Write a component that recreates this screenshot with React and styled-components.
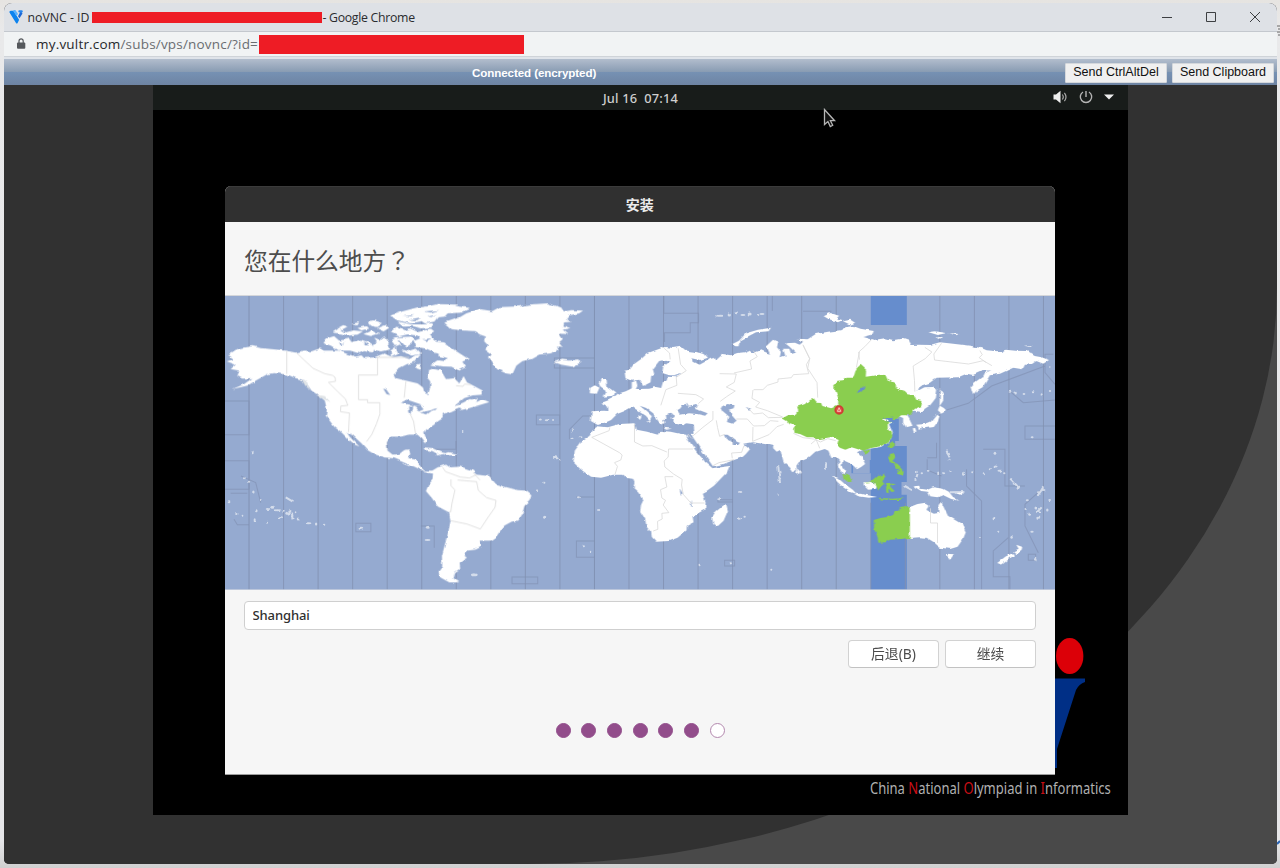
import React from "react";
import styled, { createGlobalStyle } from "styled-components";

const uiFont = '"Open Sans", "Noto Sans", "Noto Sans CJK SC", sans-serif';
const guestFont = '"Noto Sans", "Noto Sans CJK SC", sans-serif';

const GlobalStyle = createGlobalStyle`
  * { box-sizing: border-box; }
  body { margin: 0; background: #e3e3e4; overflow: hidden; }
`;

const Page = styled.div`
  position: relative;
  width: 1280px;
  height: 868px;
  padding: 3px 3px 4px 4px;
  background: linear-gradient(#e6e4e1 0, #e9e9ea 30px, #e6e6e8 840px, #d0d0d0 868px);
`;

const BrowserWindow = styled.div`
  width: 1273px;
  height: 861px;
  display: flex;
  flex-direction: column;
  border-radius: 8px 8px 5px 5px;
  overflow: hidden;
  background: #313131;
`;

const TitleBar = styled.header`
  height: 29px;
  display: flex;
  align-items: center;
  padding: 0 16px 0 5px;
  background: #dee1e6;
  border-bottom: 1px solid #c4c8ce;
  font: 12.3px ${uiFont};
  color: #2a2b2e;
  white-space: pre;
`;

const TitleText = styled.span`
  margin-left: ${(p) => p.$gap}px;
  letter-spacing: ${(p) => p.$tracking || 0}px;
`;

const Redaction = styled.span`
  width: ${(p) => p.$w}px;
  height: ${(p) => p.$h}px;
  margin-left: ${(p) => p.$gap}px;
  background: #ee1c25;
`;

const WindowControls = styled.div`
  margin-left: auto;
  display: flex;
  gap: 32px;
`;

const AddressBar = styled.div`
  height: 25px;
  display: flex;
  align-items: center;
  padding: 0 0 0 12px;
  background: #f1f3f4;
  border-bottom: 1px solid #cfd3d8;
  font: 13.5px ${uiFont};
  color: #6a6d71;
`;

const Url = styled.span`
  margin-left: 10px;
  letter-spacing: 0.19px;
  b { font-weight: 400; color: #26282b; }
`;

const StatusBar = styled.div`
  height: 28px;
  display: flex;
  align-items: center;
  justify-content: flex-end;
  gap: 5px;
  padding: 1px 3px 0 468px;
  border-top: 2px solid #dfe3e9;
  background: linear-gradient(#b2bdcd 0%, #899cb3 49%, #7691b3 51%, #6e84a3 100%);
`;

const StatusText = styled.span`
  margin-right: auto;
  padding-bottom: 1px;
  font: bold 11.6px "Liberation Sans", sans-serif;
  letter-spacing: -0.1px;
  color: #fff;
`;

const StatusButton = styled.button`
  width: ${(p) => p.$w}px;
  height: 20px;
  padding: 0 0 2px;
  border: 1px solid #d5d8dc;
  border-radius: 1px;
  background: #f0f0f0;
  color: #111;
  font: 12.5px "Liberation Sans", sans-serif;
  white-space: nowrap;
`;

const Viewport = styled.main`
  flex: 1;
  background: #494949;
`;

const Backdrop = styled.div`
  width: 1273px;
  height: 779px;
  padding-left: 149px;
  border-bottom-right-radius: 750px 578px;
  background: #313131;
`;

const Desktop = styled.div`
  position: relative;
  width: 975px;
  height: 730px;
  background: #000;
`;

const TopBar = styled.div`
  height: 25px;
  display: grid;
  grid-template-columns: 1fr auto 1fr;
  align-items: center;
  background: #181c1a;
  color: #cfcfcf;
  font: 500 12.8px ${guestFont};
  letter-spacing: 0.2px;
  white-space: pre;
`;

const Tray = styled.div`
  display: flex;
  justify-content: flex-end;
  align-items: center;
  gap: 11px;
  padding: 0 14px 1px 0;
`;

const Dialog = styled.section`
  position: relative;
  width: 830.5px;
  height: 588.5px;
  margin: 76px 0 0 71.5px;
  display: flex;
  flex-direction: column;
  border-radius: 6px 6px 0 0;
  background: #f6f6f6;
  border-bottom: 1px solid #9c9c9c;
  overflow: hidden;
  font-family: ${guestFont};
  color: #4b4b4b;
`;

const DialogTitle = styled.div`
  height: 35.5px;
  display: flex;
  align-items: center;
  justify-content: center;
  background: #303030;
  border-top: 1px solid #3b3b3b;
  color: #ececec;
  font-size: 14px;
  font-weight: 700;
`;

const Question = styled.h1`
  height: 73.5px;
  margin: 0;
  padding: 0 20px 0 19.5px;
  line-height: 76px;
  font-size: 23.7px;
  font-weight: 400;
  color: #4d4d4d;
`;

const QuestionMark = styled.span`
  font-family: "Noto Sans CJK TC", sans-serif;
  text-spacing-trim: space-all;
`;

const MapFrame = styled.div`
  height: 295px;
  border-top: 1px solid #d4d6da;
  svg { display: block; width: 831px; height: 294px; margin-left: -0.5px; }
`;

const Form = styled.div`
  padding: 11px 19px 0;
  display: flex;
  flex-direction: column;
  gap: 9.5px;
`;

const CityField = styled.input`
  height: 29px;
  width: 100%;
  padding: 0 8px 1px;
  border: 1px solid #cfcfcf;
  border-radius: 4px;
  background: #fff;
  color: #303030;
  font: 500 13px ${guestFont};
  letter-spacing: -0.1px;
  outline: none;
`;

const Actions = styled.div`
  display: flex;
  justify-content: flex-end;
  gap: 6px;
`;

const ActionButton = styled.button`
  width: 91px;
  height: 28.5px;
  padding: 0 0 2px;
  border: 1px solid #d2d2d2;
  border-bottom-color: #c2c2c2;
  border-radius: 4px;
  background: #fff;
  color: #4b4b4b;
  font: 13.8px ${guestFont};
`;

const Steps = styled.div`
  margin-top: 54.5px;
  padding-left: 1px;
  display: flex;
  justify-content: center;
  gap: 10.7px;
`;

const Step = styled.span`
  width: 15px;
  height: 15px;
  border-radius: 50%;
  border: 1px solid ${(p) => (p.$done ? "#924d8b" : "#b287ad")};
  background: ${(p) => (p.$done ? "#924d8b" : "#fff")};
`;

const Emblem = styled.svg`
  position: absolute;
  left: 897px;
  top: 550px;
`;

const Pointer = styled.svg`
  position: absolute;
  left: 670px;
  top: 23px;
`;

const Tagline = styled.div`
  width: max-content;
  margin: 0 17px 0 auto;
  transform: scaleX(0.765);
  transform-origin: right center;
  font: 17px/25px ${guestFont};
  color: #b0b0b0;
  em { font-style: normal; color: #c80f16; }
`;

const BehindEdge = styled.svg`
  position: absolute;
  left: 1277px;
  top: 0;
`;

const americas = [
  "M8 212L30 205 12 192 22 187 40 175 62 170 85 166 110 172 150 176 185 180 215 186 240 180 262 182 285 174 300 180 345 180 370 190 395 198 412 194 420 202 450 200 480 188 505 200 530 196 555 205 575 195 590 190 570 215 548 220 520 235 508 250 515 262 545 270 580 278 596 290 600 305 612 310 618 290 618 272 608 260 612 240 625 234 650 240 665 265 690 262 705 278 718 256 728 275 750 286 775 300 775 312 745 314 720 322 700 338 688 348 718 335 745 320 760 322 756 334 775 325 795 334 775 340 735 352 710 358 705 350 680 362 655 370 655 380 640 390 630 402 606 417 600 428 608 450 602 458 592 444 580 432 555 432 530 438 500 438 488 455 490 480 505 492 525 490 540 478 556 476 558 490 552 502 580 508 586 525 600 540 625 540 640 548 620 548 595 540 570 528 545 518 510 503 480 500 450 490 430 478 412 458 385 433 368 424 376 438 390 452 406 468 392 462 370 443 352 425 330 408 318 392 305 375 308 355 302 330 280 312 262 300 252 285 240 268 215 262 190 252 150 247 130 250 95 270 70 285 25 295 60 280 85 262 55 264 40 256 46 240 20 235 35 222Z",
  "M298 157L308 143 330 136 345 150 375 144 382 154 410 147 440 157 452 170 445 185 420 181 405 188 378 180 345 180 320 165Z",
  "M325 126L345 112 365 125 388 119 416 122 400 132 370 135 352 129Z",
  "M340 111L354 103 370 108 355 116ZM382 100L405 94 400 104ZM430 91L450 89 476 97 460 109 440 105ZM458 113L488 102 494 112 478 122Z",
  "M498 75L535 62 580 50 680 44 737 52 712 66 670 68 661 78 640 80 630 93 602 98 592 91 560 98 518 88Z",
  "M500 126L520 108 543 119 558 113 582 124 620 114 630 122 602 137 550 131 524 137Z",
  "M520 92L560 101 600 101 628 97 622 110 590 113 566 106 540 108ZM560 58L640 40 700 42 660 60 600 70ZM418 130L440 120 466 128 440 136ZM505 140L560 138 572 148 545 168 528 150ZM445 160L468 152 490 162 498 176 470 182 452 178ZM575 128L615 126 625 142 590 146ZM400 112L425 106 432 114 412 119Z",
  "M450 144L465 150 480 137 495 158 468 169ZM501 149L520 139 530 163 516 169ZM499 180L514 169 522 190 501 199Z",
  "M568 151L590 142 606 151 623 142 635 153 660 155 682 172 705 187 733 205 714 213 725 229 704 240 681 228 653 227 621 222 639 209 662 211 670 202 640 194 623 181 604 173 574 169Z",
  "M530 176L552 181 574 174 590 190 562 195 545 187ZM572 224L584 219 592 238 577 233ZM630 99L616 104 608 98ZM598 470L624 472 652 485 670 489 642 492 625 481 602 478ZM658 490L675 484 697 490 689 494 665 493ZM636 490L649 493 638 494Z",
  "M624 540L640 530 665 522 677 530 710 528 745 540 756 552 795 556 815 580 840 588 880 598 904 600 921 614 916 630 900 646 893 672 882 690 862 693 840 705 831 716 817 736 797 750 767 750 772 768 754 777 730 780 721 796 728 801 703 819 705 835 692 845 687 862 705 875 675 875 648 860 643 843 654 828 653 795 663 757 673 720 679 690 674 665 640 647 623 622 605 601 613 582 625 567 626 550Z",
  "M660 96L706 80 726 68 766 55 804 61 826 49 884 47 912 42 970 38 1010 50 1018 62 1040 58 1076 60 1064 68 1034 74 1025 86 1042 93 1019 95 1017 105 1038 112 1015 117 1031 130 1005 129 1015 145 1005 154 1015 168 998 168 1002 179 978 188 944 192 920 205 894 211 876 225 864 251 845 248 818 235 805 214 794 200 802 191 783 177 792 165 779 151 785 138 768 132 750 121 710 119 682 115Z",
  "M990 214L1011 207 1036 210 1061 206 1068 216 1044 228 1010 222Z",
];

const oldWorld = [
  "M165 240L180 237 194 220 216 204 235 187 260 178 285 169 310 172 335 168 350 180 380 184 402 190 412 201 392 208 369 203 372 213 390 222 405 214 421 202 435 198 441 207 460 190 484 194 503 187 525 185 534 178 551 187 574 179 601 190 590 166 610 147 626 154 622 170 634 184 630 200 647 195 640 174 659 174 664 190 679 186 657 166 646 158 676 156 690 162 700 153 681 144 714 146 738 130 775 123 812 119 827 110 850 106 872 114 912 121 907 132 881 139 913 148 945 143 970 149 998 144 1018 151 1025 163 1047 162 1080 163 1110 155 1150 159 1200 165 1233 171 1250 179 1300 183 1307 177 1337 180 1370 181 1394 196 1415 200 1437 208 1420 219 1399 211 1386 220 1365 222 1358 236 1330 231 1290 249 1260 254 1250 270 1238 290 1220 300 1209 313 1202 289 1215 275 1240 257 1245 247 1264 239 1235 242 1210 253 1190 249 1165 260 1100 261 1080 276 1050 286 1044 300 1064 290 1090 289 1102 297 1098 322 1081 344 1065 354 1055 364 1032 360 1010 372 1020 388 1028 405 1009 410 1000 397 1000 382 987 377 971 381 945 386 970 394 958 401 969 428 960 453 936 469 898 474 873 479 862 485 878 502 886 520 874 529 862 536 851 525 837 516 819 508 816 525 829 543 820 551 808 532 808 511 796 500 785 502 776 480 765 475 735 485 715 503 688 514 680 525 682 537 668 545 657 530 643 518 632 478 621 483 610 472 612 466 590 461 550 455 520 459 503 454 488 443 474 432 463 432 469 445 489 455 490 463 506 463 514 452 525 463 541 476 528 491 518 500 493 508 464 519 430 527 406 492 370 440 365 429 375 430 372 401 350 398 340 404 318 399 314 387 305 382 315 376 304 369 289 373 291 385 281 384 285 397 275 403 264 388 251 368 230 352 211 345 233 364 247 377 241 389 229 375 204 359 188 349 164 362 143 370 125 388 110 395 85 403 64 391 67 362 100 360 117 361 116 348 96 336 113 330 130 322 145 309 169 302 187 293 187 275 200 270 204 285 199 295 239 294 259 289 275 292 281 272 291 270 294 258 320 260 324 254 300 254 278 247 281 228 302 212 287 207 269 211 250 235 254 250 245 257 243 275 229 282 221 286 210 267 187 270 168 263Z",
  "M85 407L115 410 150 400 195 398 202 417 233 423 265 432 271 420 303 423 331 429 350 432 357 449 377 478 407 514 429 533 480 526 472 545 433 585 412 600 399 607 408 635 407 656 369 677 372 695 352 705 351 719 324 741 298 751 260 753 247 739 245 725 231 708 227 686 212 661 215 642 222 627 210 606 192 590 195 576 190 564 171 562 162 552 131 552 95 561 65 558 35 537 12 515 16 480 39 448 60 436 72 416Z",
  "M470 640L475 660 462 690 445 706 431 701 428 682 440 662 455 650ZM94 266L111 264 114 288 137 305 133 315 100 318 109 301 94 291 88 278ZM62 292L76 284 90 291 82 309 61 308ZM487 161L508 150 529 128 565 117 604 111 597 122 559 125 532 139 513 149 510 167 497 167ZM684 534L693 545 687 554 680 547ZM230 390L244 388 240 397ZM209 370L216 378 212 388 206 382ZM282 411L307 414 290 417Z",
  "M762 77L782 67 808 75 800 84 818 89 804 95 775 84ZM820 92L842 87 856 96 842 102ZM1076 125L1097 122 1130 127 1104 133ZM1135 127L1168 130 1158 134ZM1100 143L1116 142 1110 148ZM1362 165L1386 164 1382 169Z",
  "M1110 295L1120 310 1120 330 1110 345 1122 352 1130 360 1114 369 1104 359 1109 347ZM1100 372L1109 377 1103 394 1092 409 1065 413 1046 410 1039 402 1065 400 1083 393 1095 378ZM1029 413L1036 412 1040 423 1031 423ZM1045 410L1058 413 1047 418Z",
  "M787 555L804 561 825 580 849 597 861 610 841 603 820 590 803 574ZM854 611L875 609 894 614 922 619 897 621 866 617ZM881 575L902 573 923 584 918 595 895 597 883 585ZM1031 587L1048 585 1052 594 1073 597 1090 590 1120 594 1137 603 1149 618 1168 630 1144 625 1119 613 1103 620 1081 617 1074 603 1054 601ZM1157 608L1175 604 1184 600 1174 613Z",
  "M1018 650L1043 640 1067 636 1076 642 1070 658 1092 669 1105 667 1106 643 1114 633 1126 659 1134 675 1154 687 1177 701 1188 724 1180 744 1163 768 1141 775 1111 771 1090 753 1070 741 1049 740 1018 742ZM1130 789L1152 791 1143 804 1134 799ZM1282 817L1306 798 1328 787 1332 794 1315 807 1296 822ZM1330 782L1346 774 1339 762 1360 770 1358 777 1341 791Z",
];

const borders = [
  "M188 181V250M217 186L240 208 267 233 302 249 325 254 333 260 334 272 313 275 341 303 364 325 371 344 350 346 349 363 376 367 373 424M403 253H460V200H555M403 253V327H430V336H467V370L457 399 443 431 427 453M545 272L540 321M558 370L568 392 574 430M695 285L716 287 721 280 740 282M655 530L664 543 708 559 735 562 756 552M680 566V585L692 598 683 638 679 665M700 568L757 573 762 599 787 621 815 629 812 650 789 683 768 715 728 700 679 690M746 545L767 568",
  "M284 173L300 187 302 206M326 173L333 221 350 240 320 260 322 284 289 297 274 344M325 308L379 312 390 318 402 325 386 339M450 249L500 250 494 275 470 289 497 301 471 318 452 332M551 180L563 198 541 211 546 235 493 247M552 297H580L593 284 625 274V265L665 261 671 252 717 249 710 222 720 204 700 164M550 298L547 323 570 335 558 349 593 360 639 379M535 352L552 370 579 367 596 381 639 380M500 385H533L552 406 584 405 602 390 626 392M440 389L444 411 450 437 466 431M430 361L430 387 400 410 371 435M550 409L549 452 598 432 622 408 642 401M671 428L700 441 739 446 750 473M724 460L739 447 752 454 774 444 798 450M700 162L720 204 714 233 742 276 744 321M869 183L860 230M905 147L885 168 867 184 869 207M1065 170L1086 184 1066 204 1030 226 1034 270 1035 303M1115 158L1092 190 1094 208 1196 220 1240 210 1266 225M1230 180L1237 192 1228 201 1248 215",
  "M121 410L119 420 67 440 150 486 158 493 154 508 135 516 144 527 137 550M195 400V454L220 466 247 465 292 484M355 430L366 443M297 475H370M297 475L296 499 284 511 286 529 312 550 338 566 336 583 341 611 364 637H405M311 558H286L292 589 273 597 277 622 288 629 281 643 298 666 277 668 278 685 264 692 265 716 251 721M1082 653V697H1103V757M430 525L448 516 493 507M488 503L486 487 516 485 523 465",
];

const zoneDetails = "M0 315H75V416H0M0 494H75V581M0 580H75M20 592H70M51 540L95 560 110 620M30 670L40 686H75M395 682H440V707H395ZM590 690H630V755M695 435V460H625M1110 186H990V216H1110M936 357H1006V386H936ZM1110 360H1075L1035 400V430M1110 603H1056M1110 735H1056V784H1110M863 843H940V863H863ZM1318 0V52H1422V80H1397V110H1318M1320 110V138M1643 0V45M1525 611H1480V618H1525M1500 793H1530V810H1500ZM1735 46H1820M2165 342L2230 322 2300 270 2460 210M2355 286L2395 320 2490 312M2107 490V522L2150 540M2107 485H2135V440M2225 520V570L2270 615V882M2275 460H2340V570H2400M2490 390H2400V430H2490M2485 175H2460V230L2490 265M2350 725L2305 765V842H2355V882M2410 775H2432V793H2410ZM2450 580L2400 625V690L2440 770";

const islets = [
  [85, 486, 8], [60, 563, 6], [75, 573, 7], [88, 604, 7], [110, 625, 5], [15, 635, 8], [97, 660, 7], [37, 670, 7], [55, 675, 6], [92, 687, 6], [129, 696, 6],
  [132, 655, 14], [148, 650, 12], [160, 659, 18], [178, 660, 8], [188, 668, 8], [204, 675, 7], [216, 665, 8], [222, 685, 8], [170, 680, 14], [253, 698, 18], [276, 700, 7], [300, 702, 7],
  [410, 714, 14], [611, 710, 12], [610, 748, 18], [715, 421, 5], [948, 385, 9], [968, 389, 14], [986, 388, 6], [993, 501, 15], [1005, 506, 7], [960, 576, 6], [938, 600, 6], [1062, 620, 9], [1121, 658, 6], [961, 680, 10], [1078, 767, 7], [1097, 783, 7], [750, 852, 20], [1045, 444, 14], [1067, 440, 8], [1046, 419, 5],
  [1484, 626, 12], [1545, 604, 10], [1546, 683, 12], [1560, 678, 7], [1517, 818, 10], [1425, 822, 6], [1640, 837, 6], [1662, 526, 4], [1668, 545, 5], [1667, 565, 5], [1659, 610, 7],
  [2076, 544, 5], [2091, 548, 7], [2110, 540, 8], [2140, 547, 6], [2155, 548, 12], [2177, 544, 7], [2216, 548, 9], [2242, 545, 6], [2277, 551, 7], [2168, 487, 7], [2174, 507, 6], [2296, 533, 9], [2312, 529, 12], [2324, 540, 13], [2338, 548, 7], [2310, 488, 8], [2358, 566, 7], [2368, 579, 10], [2380, 590, 9], [2407, 629, 9], [2402, 655, 7], [2414, 671, 8], [2440, 605, 8], [2455, 598, 13], [2433, 652, 9], [2442, 665, 10], [2440, 681, 12], [2467, 658, 7], [2474, 628, 8], [2421, 723, 10], [2307, 684, 8], [2320, 723, 6], [2265, 739, 6], [2360, 740, 7], [2423, 440, 12], [2355, 303, 9], [2372, 304, 7], [2397, 310, 8], [2424, 305, 8], [2450, 309, 6], [2475, 301, 7], [2473, 229, 7], [2431, 806, 7], [2072, 568, 7],
  [1485, 75, 20], [1514, 73, 10], [1535, 68, 10], [1555, 73, 15], [1575, 70, 12], [1612, 70, 15], [1600, 73, 8],
];

function TimezoneMap() {
  const lines = Array.from({ length: 24 }, (_, i) => 75 + i * 103.5);
  return (
    <svg viewBox="0 0 2490 882" preserveAspectRatio="none" aria-label="World time zones">
      <defs>
        <filter id="coast" filterUnits="userSpaceOnUse" x="-1700" y="-20" width="4300" height="940">
          <feTurbulence type="fractalNoise" baseFrequency="0.05" numOctaves="2" seed="4" result="noise" />
          <feDisplacementMap in="SourceGraphic" in2="noise" scale="10" xChannelSelector="R" yChannelSelector="G" />
        </filter>
      </defs>
      <rect width="2490" height="882" fill="#95aad0" />
      <path d="M1938 0H2046V87H1938ZM1938 455L1985 440 1990 368H2022V435H2011V450H2046V882H1938V532H1880V492H1938Z" fill="#668dcd" />
      <path d="M1885 490H1935V532H1885ZM2030 558H2047V596H2030Z" fill="#95aad0" />
      <g fill="none" stroke="#8292b3" strokeWidth="3">
        {lines.map((x, i) => <path key={i} d={`M${x} ${i >= 18 && i < 20 ? 620 : 0}V882`} opacity={i === 0 || i === 10 ? 1 : 0.85} />)}
        <path d={zoneDetails} opacity=".7" />
      </g>
      <g filter="url(#coast)">
        <g transform="translate(0 -16)">
          {americas.map((d, i) => <path key={i} d={d} fill="#fff" />)}
          <g fill="#95aad0">
            <path d="M530 336L548 327 570 334 592 342 575 346 552 341ZM555 347L568 343 562 370 555 365ZM575 347L589 345 598 356 583 363ZM586 366L609 361 627 357 608 371ZM477 294L486 296 498 313 487 310ZM622 357L639 352 632 359ZM732 323L752 316 766 318 742 327Z" />
            <path d="M420 152L437 164 422 164ZM345 155L360 157 350 164ZM535 77L570 73 560 77ZM552 87L590 80 579 88ZM600 62L645 58 620 66ZM610 78L637 72 620 79ZM631 186L648 190 639 201ZM610 203L623 209 614 217Z" />
          </g>
          <path d="M302 316L318 334 292 322 275 312ZM232 265L245 270 258 299 243 284Z" fill="#e0e4e7" />
        </g>
        <g transform="translate(1035 -16)">
          {oldWorld.map((d, i) => <path key={i} d={d} fill="#fff" />)}
          <g fill="#95aad0">
            <path d="M323 359L333 353 338 344 349 339 354 348 365 347 383 342 376 355 394 360 414 368 407 375 382 370 359 368 332 372ZM453 352L473 340 495 344 492 353 477 357 491 366 489 377 501 390 489 399 472 394 476 378 459 364ZM528 349L545 354 538 357ZM330 596L340 611 334 615ZM364 627L370 647 365 648ZM316 251L336 247 326 253Z" />
          </g>
        </g>
        <g transform="translate(1635 -16)" fill="#8ace50">
          <path d="M38 383L55 374 75 372 86 359 82 348 106 340 119 327 132 326 140 336 154 337 158 346 185 353 205 344 206 323 195 296 190 285 203 270 220 269 231 261 251 261 259 235 272 222 289 237 288 258 309 255 328 252 347 253 354 268 374 277 376 293 404 300 415 311 434 314 439 327 458 332 454 347 434 355 421 374 394 374 380 385 340 385 347 392 371 391 354 399 354 411 366 426 368 436 357 455 336 467 304 472 280 480 265 476 245 470 227 477 210 471 203 459 207 445 191 438 150 445 130 440 112 440 91 430 72 427 70 417 79 405 60 401 52 391Z" />
          <path d="M218 550L240 556 246 573 235 574 222 564ZM277 480L297 479 296 486 286 492ZM359 458L367 453 373 464 364 472 357 469ZM360 494L371 489 376 501 368 511 380 519 367 521 358 508ZM371 522L382 519 396 532 383 536ZM380 541L393 533 402 543 397 554 383 550ZM282 576L309 570 326 555 342 550 347 558 338 568 343 579 333 588 326 600 316 579 305 574ZM349 578L379 580 360 587 375 602 365 604 356 593 357 609 349 605ZM327 621L345 623 367 624 390 623 403 618 388 628 350 627 330 626Z" />
          <path d="M312 688L332 682 352 679 368 674 374 662 386 660 391 652 405 650 414 646 420 654V741L395 745 360 747 348 755 326 756 322 735 313 715Z" />
          <path d="M258 306L275 293 287 285 285 296 265 306Z" fill="#668dcd" />
          <path d="M341 380L371 378 363 387 377 391 350 396 354 387Z" fill="#668dcd" />
        </g>
      </g>
      <g fill="none" stroke="#d9d9d9" strokeWidth="2.4">
        <path d={borders[0]} transform="translate(0 -16)" />
        <g transform="translate(1035 -16)"><path d={borders[1]} /><path d={borders[2]} /></g>
      </g>
      <g fill="#e9edf4" opacity=".75" filter="url(#coast)" transform="translate(0 -16)">
        {islets.map(([x, y, w], i) => <ellipse key={i} cx={x} cy={y} rx={w / 2} ry={i % 3 ? 3 : 4.5} />)}
        <path d="M185 620L205 632M200 659L192 674M204 666L205 686M2165 480L2174 500M2358 565L2382 592M2455 590L2438 615M2432 668L2450 650M1661 528L1666 580M1804 518L1803 538M2040 586L2062 598M2075 560L2078 550M2175 605L2217 604" stroke="#e9edf4" strokeWidth="6" fill="none" />
      </g>
      <circle cx="1843" cy="342" r="11.5" fill="#df5046" stroke="#cf3d35" strokeWidth="5" />
      <path d="M1838 346L1843 335 1848 346Z" fill="none" stroke="#ffd8cc" strokeWidth="2.5" />
      <path d="M0 881H2490M1 0V882" stroke="#c8d0de" strokeWidth="3" />
    </svg>
  );
}

const VultrMark = () => (
  <svg width="15" height="14" viewBox="0 0 15 14">
    <path d="M.5 2.4Q0 .7 1.7.7h2q.8 0 1.3.8l4.8 7.7q.4.7 0 1.4L8.6 13q-.8 1-1.6 0Z" fill="#0c82ee" />
    <path d="M5.5.8 7.6 4" stroke="#58b1ff" strokeWidth="2.4" strokeLinecap="round" />
    <path d="m9 6.2 1.5 2.1 3-4.7-1.8-2.6Z" fill="#1d68d6" />
    <path d="M10.4 1.4h2.3" stroke="#2587ef" strokeWidth="2.2" strokeLinecap="round" />
  </svg>
);

const LockIcon = () => (
  <svg width="10" height="12" viewBox="0 0 10 12">
    <rect x="1" y="4.6" width="8.3" height="6.2" rx="1" fill="#55585c" />
    <path d="M3 5V3a2.1 2.1 0 0 1 4.2 0v2" fill="none" stroke="#55585c" strokeWidth="1.2" />
  </svg>
);

const ControlIcon = ({ d }) => (
  <svg width="12" height="12" viewBox="0 0 12 12" fill="none" stroke="#3d3f42" strokeWidth="1"><path d={d} /></svg>
);

const VolumeIcon = () => (
  <svg width="15" height="14" viewBox="0 0 15 14" fill="none" stroke="#aaa">
    <path d="M.5 4.5H3L7.5.8v12.4L3 9.5H.5Z" fill="#eee" stroke="none" />
    <path d="M9.3 4.5q2 2.5 0 5M11.4 2.8q3.2 4.2 0 8.4" strokeWidth="1.2" />
  </svg>
);

const PowerIcon = () => (
  <svg width="14" height="14" viewBox="0 0 14 14" fill="none" stroke="#b4b4b4" strokeWidth="1.4">
    <path d="M4 2A5.7 5.7 0 1 0 10 2M7 1v6" />
  </svg>
);

const CaretIcon = () => (
  <svg width="10" height="6" viewBox="0 0 10 6"><path d="M0 .5h10L5 5.5Z" fill="#eee" /></svg>
);

export default function App() {
  return (
    <Page>
      <GlobalStyle />
      <BrowserWindow>
        <TitleBar>
          <VultrMark />
          <TitleText $gap={3.5} $tracking={0}>noVNC - ID</TitleText>
          <Redaction $w={230} $h={11} $gap={3} />
          <TitleText $gap={0} $tracking={-0.3}>- Google Chrome</TitleText>
          <WindowControls>
            <ControlIcon d="M1 6.5h10" />
            <ControlIcon d="M1.5 1.5h9v9h-9z" />
            <ControlIcon d="M1 1l10 10M11 1L1 11" />
          </WindowControls>
        </TitleBar>
        <AddressBar>
          <LockIcon />
          <Url><b>my.vultr.com</b>/subs/vps/novnc/?id=</Url>
          <Redaction $w={265} $h={19} $gap={1} />
        </AddressBar>
        <StatusBar>
          <StatusText>Connected (encrypted)</StatusText>
          <StatusButton $w={102}>Send CtrlAltDel</StatusButton>
          <StatusButton $w={102}>Send Clipboard</StatusButton>
        </StatusBar>
        <Viewport>
          <Backdrop>
            <Desktop>
              <Emblem width="50" height="140" viewBox="0 0 50 140">
                <ellipse cx="19.7" cy="21" rx="13.7" ry="18" fill="#dc0008" />
                <path d="M0 43.5H35V47Q29 49 26 55L7 114V133H0Z" fill="#002f86" />
              </Emblem>
              <TopBar>
                <span />
                <span>Jul 16  07:14</span>
                <Tray><VolumeIcon /><PowerIcon /><CaretIcon /></Tray>
              </TopBar>
              <Dialog>
                <DialogTitle>安装</DialogTitle>
                <Question>您在什么地方<QuestionMark lang="zh-TW">？</QuestionMark></Question>
                <MapFrame><TimezoneMap /></MapFrame>
                <Form>
                  <CityField defaultValue="Shanghai" aria-label="City" />
                  <Actions>
                    <ActionButton>后退(B)</ActionButton>
                    <ActionButton>继续</ActionButton>
                  </Actions>
                </Form>
                <Steps>
                  {[1, 1, 1, 1, 1, 1, 0].map((done, i) => <Step key={i} $done={done} />)}
                </Steps>
              </Dialog>
              <Tagline>China <em>N</em>ational <em>O</em>lympiad in <em>I</em>nformatics</Tagline>
              <Pointer width="14" height="20" viewBox="0 0 14 20">
                <path d="M1.5 1.5v15l3.4-3 2.4 5 2.4-1.2-2.3-4.6h4.2Z" fill="#111" stroke="#b5b5b5" strokeWidth="1.3" />
              </Pointer>
            </Desktop>
          </Backdrop>
        </Viewport>
      </BrowserWindow>
      <BehindEdge width="3" height="868" viewBox="0 0 3 868">
        <path d="M0 26h3M1 29h2M0 32h3M1 35h2" stroke="#666" />
        <path d="M0 844l3-3" stroke="#2864b4" strokeWidth="2" />
      </BehindEdge>
    </Page>
  );
}
